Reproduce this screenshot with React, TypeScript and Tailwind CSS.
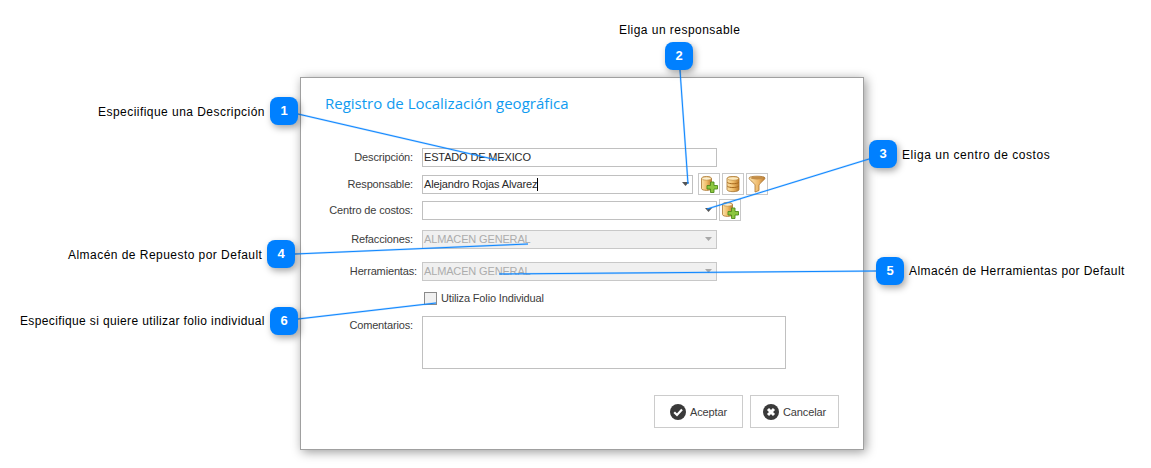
import React from "react";

const callouts = [
  { n: 1, bx: "left-[270px] top-[97px]", text: "Especiifique una Descripción", tc: "left-[98px] top-[103px] tracking-[0.46px]" },
  { n: 2, bx: "left-[665px] top-[42px]", text: "Eliga un responsable", tc: "left-[619px] top-[21px] tracking-[0.46px]" },
  { n: 3, bx: "left-[869px] top-[140px]", text: "Eliga un centro de costos", tc: "left-[902px] top-[146px] tracking-[0.54px]" },
  { n: 4, bx: "left-[267px] top-[240px]", text: "Almacén de Repuesto por Default", tc: "left-[68px] top-[246px] tracking-[0.46px]" },
  { n: 5, bx: "left-[876px] top-[257px]", text: "Almacén de Herramientas por Default", tc: "left-[909px] top-[262px] tracking-[0.43px]" },
  { n: 6, bx: "left-[270px] top-[307px]", text: "Especifique si quiere utilizar folio individual", tc: "left-[20px] top-[312px] tracking-[0.37px]" },
];

const lines = [
  [298, 114, 497, 160],
  [680, 70, 688, 184],
  [869, 159, 707, 209],
  [295, 254, 528, 244],
  [876, 271, 499, 274],
  [298, 319, 436, 303],
];

function Arrow({ disabled }: { disabled?: boolean }) {
  return (
    <svg width="7" height="4" viewBox="0 0 7 4" className="shrink-0">
      <path d="M0 0H7L3.5 4Z" fill={disabled ? "#a8a8a8" : "#555555"} />
    </svg>
  );
}

function Label({ children, wide }: { children: React.ReactNode; wide?: boolean }) {
  return (
    <div className={`${wide ? "w-[116px] mr-[5px]" : "w-[112px] mr-[9px]"} shrink-0 text-right text-[#3c3c3c] whitespace-nowrap`}>
      {children}
    </div>
  );
}

function Defs() {
  return (
    <svg width="0" height="0" className="absolute">
      <defs>
        <linearGradient id="gold" x1="0" x2="1" y1="0" y2="0">
          <stop offset="0" stopColor="#fbe2a8" />
          <stop offset="0.5" stopColor="#f0bd6a" />
          <stop offset="1" stopColor="#bd7a2a" />
        </linearGradient>
        <linearGradient id="funnel" x1="0" x2="1" y1="0" y2="0">
          <stop offset="0" stopColor="#fbe6b4" />
          <stop offset="0.6" stopColor="#eeb767" />
          <stop offset="1" stopColor="#b9772c" />
        </linearGradient>
      </defs>
    </svg>
  );
}

function DbPlus() {
  return (
    <svg width="18" height="18" viewBox="0 0 18 18">
      <path d="M1.5 3.5C1.5 .8 11.5 .8 11.5 3.5V13.5C11.5 16 1.5 16 1.5 13.5Z" fill="url(#gold)" stroke="#a8742f" strokeWidth="0.8" />
      <ellipse cx="6.5" cy="3.5" rx="4.6" ry="1.7" fill="#fdf0cf" stroke="#b98437" strokeWidth="0.6" />
      <path d="M10.5 7.5H14V11H17.5V14.5H14V18H10.5V14.5H7V11H10.5Z" transform="translate(0 -0.5)" fill="#8cc63f" stroke="#4f8a1c" strokeWidth="0.9" />
    </svg>
  );
}

function Db() {
  return (
    <svg width="18" height="18" viewBox="0 0 18 18">
      <path d="M3 3.5C3 .8 15 .8 15 3.5V14.5C15 17.4 3 17.4 3 14.5Z" fill="url(#gold)" stroke="#a8742f" strokeWidth="0.8" />
      <ellipse cx="9" cy="3.5" rx="5.5" ry="1.8" fill="#fdeac0" stroke="#b98437" strokeWidth="0.6" />
      <path d="M3.3 7.4C5 9.2 13 9.2 14.7 7.4M3.3 11.2C5 13 13 13 14.7 11.2" fill="none" stroke="#a8691f" strokeWidth="1" />
    </svg>
  );
}

function Funnel() {
  return (
    <svg width="18" height="18" viewBox="0 0 18 18">
      <path d="M1 3C1 .6 17 .6 17 3C17 5 11.5 8 11 10V15.5L7 17V10C6.5 8 1 5 1 3Z" fill="url(#funnel)" stroke="#a8742f" strokeWidth="0.8" />
      <ellipse cx="9" cy="3" rx="6.4" ry="1.5" fill="#c48e48" />
    </svg>
  );
}

function IconBtn({ children, cls }: { children: React.ReactNode; cls?: string }) {
  return (
    <div className={`w-[22px] h-[22px] border border-[#c8c8c8] flex items-center justify-center shrink-0 bg-white ${cls ?? ""}`}>
      {children}
    </div>
  );
}

function CheckIcon() {
  return (
    <svg width="16" height="16" viewBox="0 0 16 16">
      <circle cx="8" cy="8" r="8" fill="#3a3a3a" />
      <path d="M4.2 8.2L7 11L12 5.6" fill="none" stroke="#ffffff" strokeWidth="2.2" />
    </svg>
  );
}

function XIcon() {
  return (
    <svg width="16" height="16" viewBox="0 0 16 16">
      <circle cx="8" cy="8" r="8" fill="#3a3a3a" />
      <path d="M5 5L11 11M11 5L5 11" fill="none" stroke="#ffffff" strokeWidth="3" />
    </svg>
  );
}

export default function App() {
  return (
    <div className="relative w-[1151px] h-[468px] bg-white overflow-hidden font-['Liberation_Sans',sans-serif]">
      <Defs />

      <div className="absolute left-[300px] top-[77px] w-[564px] h-[373px] bg-white border border-[#a0a0a0] shadow-[2px_2px_10px_rgba(0,0,0,0.4)] flex flex-col text-[11px] tracking-[-0.15px] leading-[18px]">
        <h1 className="ml-[24px] mt-[13px] h-[25px] text-[15px] leading-[24px] font-normal text-[#0f9bf0] font-['Open_Sans',sans-serif] tracking-normal">
          Registro de Localización geográfica
        </h1>

        <div className="mt-[32px] flex items-center h-[18px]">
          <Label>Descripción:</Label>
          <div className="w-[295px] h-[19px] border border-[#c0c0c0] pl-[1px] text-[#2a2a2a] flex items-center">ESTADO DE MEXICO</div>
        </div>

        <div className="mt-[9px] flex items-center h-[18px]">
          <Label>Responsable:</Label>
          <div className="w-[271px] h-[19px] border border-[#c0c0c0] pl-[1px] pr-[3px] text-[#2a2a2a] flex items-center justify-between">
            <span className="flex items-center">
              Alejandro Rojas Alvarez
              <span className="w-px h-[13px] bg-black" />
            </span>
            <Arrow />
          </div>
          <div className="ml-[5px] flex gap-[2px]">
            <IconBtn><DbPlus /></IconBtn>
            <IconBtn><Db /></IconBtn>
            <IconBtn><Funnel /></IconBtn>
          </div>
        </div>

        <div className="mt-[8px] flex items-center h-[18px]">
          <Label>Centro de costos:</Label>
          <div className="w-[295px] h-[19px] border border-[#c0c0c0] pr-[4px] flex items-center justify-end">
            <Arrow />
          </div>
          <IconBtn cls="ml-[2px]"><DbPlus /></IconBtn>
        </div>

        <div className="mt-[11px] flex items-center h-[18px]">
          <Label>Refacciones:</Label>
          <div className="w-[295px] h-[19px] border border-[#c8c8c8] bg-[#f0f0f0] pl-[1px] pr-[4px] text-[#acacac] flex items-center justify-between">
            ALMACEN GENERAL
            <Arrow disabled />
          </div>
        </div>

        <div className="mt-[14px] flex items-center h-[18px]">
          <Label wide>Herramientas:</Label>
          <div className="w-[295px] h-[19px] border border-[#c8c8c8] bg-[#f0f0f0] pl-[1px] pr-[4px] text-[#acacac] flex items-center justify-between">
            ALMACEN GENERAL
            <Arrow disabled />
          </div>
        </div>

        <div className="mt-[9px] ml-[123px] flex items-center h-[18px] text-[#3c3c3c]">
          <div className="w-[13px] h-[13px] border border-[#8a8a8a] bg-[#f0f0f0] mr-[4px]" />
          Utiliza Folio Individual
        </div>

        <div className="mt-[9px] flex items-start">
          <Label>Comentarios:</Label>
          <div className="w-[364px] h-[53px] border border-[#c0c0c0]" />
        </div>

        <div className="mt-[26px] mr-[24px] flex justify-end gap-[7px] text-[#3c3c3c]">
          <div className="w-[89px] h-[33px] border border-[#cccccc] flex items-center justify-center gap-[4px]">
            <CheckIcon /> Aceptar
          </div>
          <div className="w-[89px] h-[33px] border border-[#cccccc] flex items-center justify-center gap-[4px]">
            <XIcon /> Cancelar
          </div>
        </div>
      </div>

      <svg width="1151" height="468" className="absolute left-0 top-0 pointer-events-none">
        {lines.map((l, i) => (
          <g key={i}>
            <line x1={l[0]} y1={l[1]} x2={l[2]} y2={l[3]} stroke="#1e90ff" strokeOpacity="0.3" strokeWidth="2" />
            <line x1={l[0]} y1={l[1]} x2={l[2]} y2={l[3]} stroke="#0f87ff" strokeWidth="1" />
          </g>
        ))}
      </svg>

      {callouts.map((c) => (
        <React.Fragment key={c.n}>
          <div className={`absolute ${c.tc} text-[12px] leading-[18px] text-black whitespace-nowrap`}>{c.text}</div>
          <div className={`absolute ${c.bx} w-[28px] h-[28px] rounded-[8px] bg-[#0080ff] text-white text-[13px] font-bold flex items-center justify-center shadow-[2px_3px_7px_rgba(0,0,0,0.35)]`}>
            {c.n}
          </div>
        </React.Fragment>
      ))}
    </div>
  );
}
